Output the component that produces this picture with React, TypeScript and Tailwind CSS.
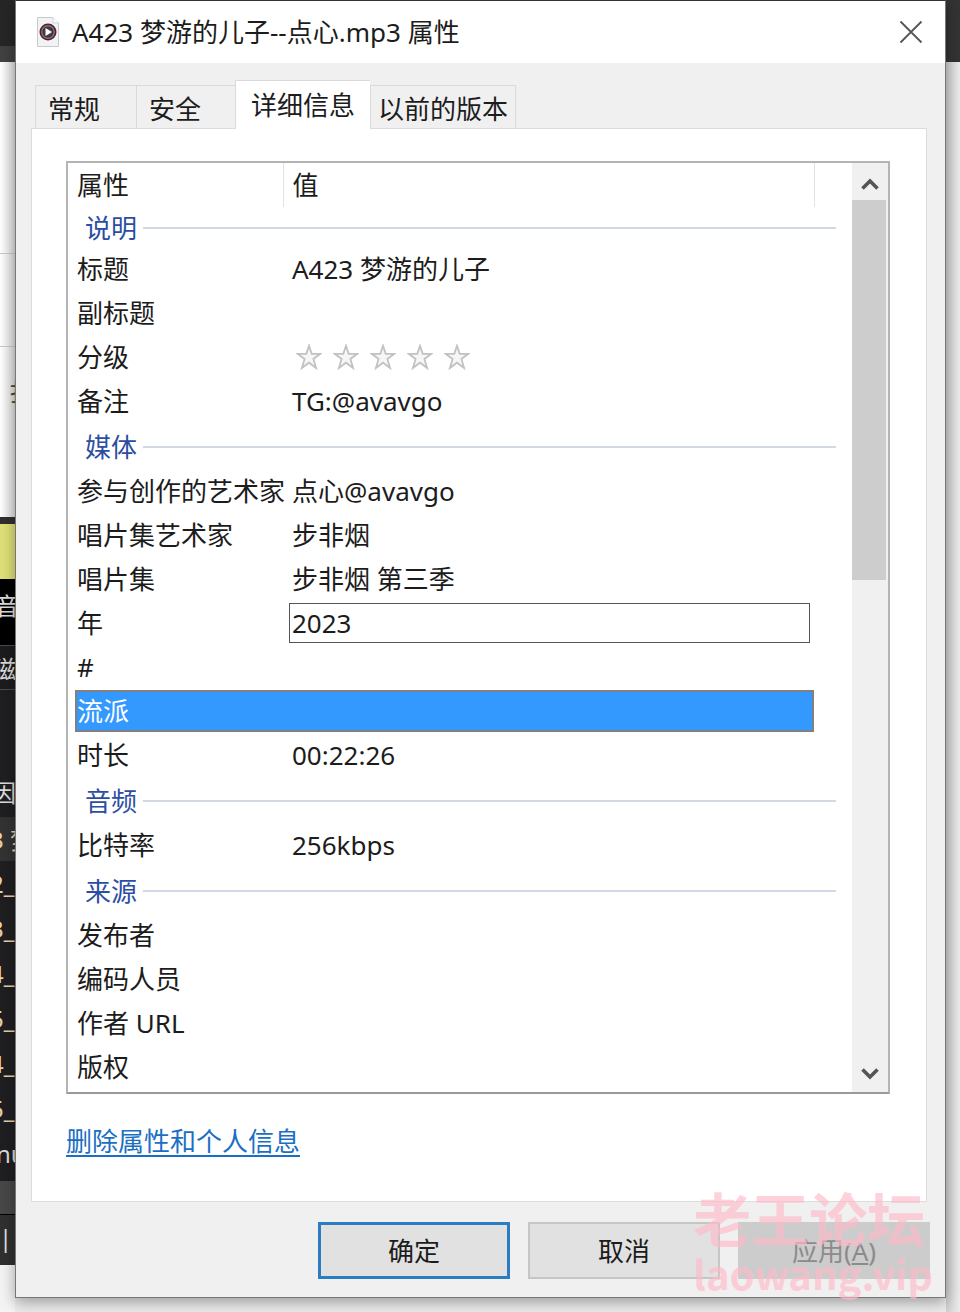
import React, { useState } from 'react';

interface Property {
  name: string;
  value?: string;
  kind?: 'stars' | 'input';
  selected?: boolean;
}

interface PropertyGroup {
  title: string;
  rows: Property[];
}

const groups: PropertyGroup[] = [
  {
    title: '说明',
    rows: [
      { name: '标题', value: 'A423 梦游的儿子' },
      { name: '副标题' },
      { name: '分级', kind: 'stars' },
      { name: '备注', value: 'TG:@avavgo' },
    ],
  },
  {
    title: '媒体',
    rows: [
      { name: '参与创作的艺术家', value: '点心@avavgo' },
      { name: '唱片集艺术家', value: '步非烟' },
      { name: '唱片集', value: '步非烟 第三季' },
      { name: '年', kind: 'input' },
      { name: '#' },
      { name: '流派', selected: true },
      { name: '时长', value: '00:22:26' },
    ],
  },
  {
    title: '音频',
    rows: [{ name: '比特率', value: '256kbps' }],
  },
  {
    title: '来源',
    rows: [{ name: '发布者' }, { name: '编码人员' }, { name: '作者 URL' }, { name: '版权' }],
  },
];

const tabs = [
  { label: '常规', className: 'h-[43px] border-l pl-3 pr-9' },
  { label: '安全', className: 'h-[43px] border-l pl-3 pr-[34px]' },
  { label: '详细信息', className: '-mb-px h-[49px] border-l bg-white px-[15px] pb-1', active: true },
  { label: '以前的版本', className: 'h-[43px] border-x px-[7px]' },
];

const files = ['2_', '3_', '4_', '5_', '4_', '5_'];

const FileIcon = () => (
  <svg width="22" height="30" viewBox="0 0 22 30" aria-hidden="true">
    <path d="M0.5 0.5H16L21.5 6V29.5H0.5Z" fill="#f3f3f5" stroke="#c9c9c9" />
    <path d="M16 0.5V6H21.5" fill="#fff" stroke="#d5d5d5" />
    <circle cx="11" cy="15" r="8.5" fill="#3a2b3c" />
    <circle cx="11" cy="15" r="6.2" fill="none" stroke="#a8675c" strokeWidth="1.4" />
    <circle cx="11" cy="15" r="4.6" fill="#39405a" />
    <path d="M8.5 11L15 15L8.5 19Z" fill="#fff" />
  </svg>
);

const Stars = () => (
  <div className="flex gap-[11px] pl-1">
    {[1, 2, 3, 4, 5].map((n) => (
      <button key={n} type="button" aria-label={`${n} 星`}>
        <svg width="26" height="26" viewBox="0 0 26 26" className="block">
          <path
            d="M13 1.800L15.700 9.800H24.500L17.400 14.900L20.100 24L13 18.700L5.900 24L8.600 14.900L1.500 9.800H10.300Z"
            fill="#f6f6f6"
            stroke="#c2c2c2"
            strokeWidth="1.800"
          />
        </svg>
      </button>
    ))}
  </div>
);

const PropertyRow = ({ row }: { row: Property }) => {
  const [year, setYear] = useState('2023');

  if (row.selected) {
    return (
      <tr className="h-11">
        <th scope="row" colSpan={2} className="p-0 text-left font-normal">
          <div className="flex h-[42px] items-center border-2 border-[#808080] bg-[#3399ff] text-white">
            {row.name}
          </div>
        </th>
        <td />
      </tr>
    );
  }

  return (
    <tr className="h-11">
      <th scope="row" className="p-0 pl-0.5 text-left font-normal whitespace-nowrap">
        {row.kind === 'input' ? <label htmlFor="year">{row.name}</label> : row.name}
      </th>
      <td className={row.kind === 'input' ? 'p-0 pl-1.5 pr-1' : 'p-0 pl-[9px]'}>
        {row.kind === 'stars' && <Stars />}
        {row.kind === 'input' && (
          <input
            id="year"
            value={year}
            onChange={(e) => setYear(e.target.value)}
            className="block h-10 w-full border border-[#555] bg-white pl-0.5 outline-none"
          />
        )}
        {row.value}
      </td>
      <td />
    </tr>
  );
};

// Sliver of the windows that show to the left of the dialog
const LeftEdge = () => (
  <div
    aria-hidden="true"
    className="flex w-[15px] shrink-0 flex-col overflow-hidden bg-[#f4f4f4] text-[24px] leading-[45px] whitespace-nowrap text-[#ddd]"
  >
    <div className="h-[46px] bg-[#262626]" />
    <div className="h-4 bg-[#414141]" />
    <div className="h-[191px] bg-linear-to-r from-white to-[#dcdcdc]" />
    <div className="h-[93px] border-t border-[#c8c8c8] bg-linear-to-r from-white to-[#dcdcdc]" />
    <div className="h-[171px] border-t border-[#c8c8c8] bg-linear-to-r from-white to-[#dcdcdc] pt-[22px] pl-[9px] text-[#4b4936]">
      扌
    </div>
    <div className="h-[7px] bg-[#303030]" />
    <div className="h-[55px] bg-[#dfe077]" />
    <div className="h-[66px] bg-black pt-1 -indent-[5px]">音</div>
    <div className="h-[45px] border-y border-[#4a4a4a] bg-[#1c1c1e] -indent-[8px]">磁</div>
    <div className="h-[127px] bg-[#1f1f22] pt-[80px] -indent-[8px]">因</div>
    <div className="h-[44px] bg-[#333] -indent-[10px] text-[#e9d3ae]">3 梦</div>
    {files.map((file, i) => (
      <div key={i} className="h-[45px] bg-[#1f1f22] -indent-[10px] text-[#e9d3ae]">
        {file}
      </div>
    ))}
    <div className="h-[50px] bg-[#1f1f22] -indent-[4px]">nu</div>
    <div className="h-[33px] bg-[#484848]" />
    <div className="h-[51px] border-t border-black bg-[#303030] -indent-px">|</div>
  </div>
);

const ScrollBar = () => (
  <div className="flex w-9 shrink-0 flex-col bg-[#f0f0f0] text-[#555]">
    <button type="button" aria-label="向上滚动" className="flex h-[37px] items-center pt-1 pl-[9px]">
      <svg width="18" height="14" viewBox="0 0 18 14">
        <path d="M1.500 11.500L9 4L16.500 11.500" fill="none" stroke="currentColor" strokeWidth="3.600" />
      </svg>
    </button>
    <div className="flex-1 pr-0.5">
      <div className="h-[380px] bg-[#cdcdcd]" />
    </div>
    <button type="button" aria-label="向下滚动" className="flex h-[37px] items-center pl-[9px]">
      <svg width="18" height="14" viewBox="0 0 18 14">
        <path d="M1.500 2.500L9 10L16.500 2.500" fill="none" stroke="currentColor" strokeWidth="3.600" />
      </svg>
    </button>
  </div>
);

export default function App() {
  return (
    <div className="flex min-h-screen bg-[#ececec] font-['Noto_Sans','Noto_Sans_CJK_SC',sans-serif] text-[26px] leading-9 text-[#1c1c1c]">
      <LeftEdge />

      <div
        role="dialog"
        aria-labelledby="dialog-title"
        className="relative mb-[13px] min-w-0 flex-1 self-start border border-[#777] border-t-[#333] bg-[#f0f0f0] shadow-[0_4px_14px_rgba(0,0,0,0.35)]"
      >
        <header className="flex h-[62px] items-center bg-white pr-[22px] pl-[21px]">
          <FileIcon />
          <h1 id="dialog-title" className="ml-[13px] flex-1 whitespace-nowrap">
            A423 梦游的儿子--点心.mp3 属性
          </h1>
          <button type="button" aria-label="关闭">
            <svg width="24" height="24" viewBox="0 0 24 24" className="block">
              <path d="M1.500 1.500L22.500 22.500M22.500 1.500L1.500 22.500" stroke="#555" strokeWidth="1.800" />
            </svg>
          </button>
        </header>

        <div className="pt-[17px] pr-[18px] pl-[15px]">
          <div role="tablist" className="flex items-end pl-1">
            {tabs.map((tab) => (
              <button
                key={tab.label}
                type="button"
                role="tab"
                aria-selected={!!tab.active}
                className={`relative flex items-center border-t border-[#dadada] pt-1 whitespace-nowrap ${tab.className}`}
              >
                {tab.label}
              </button>
            ))}
          </div>

          <div role="tabpanel" className="border border-[#dcdcdc] bg-white pt-8 pr-9 pb-[42px] pl-[34px]">
            <div className="flex border-2 border-[#b4b4b4] border-b-[#9a9a9a]">
              <div className="min-w-0 flex-1 pb-[3px] pl-[7px]">
                <table className="w-full table-fixed border-collapse">
                  <colgroup>
                    <col className="w-[208px]" />
                    <col />
                    <col className="w-[38px]" />
                  </colgroup>
                  <thead>
                    <tr className="h-11">
                      <th className="border-r border-[#e2e2e2] p-0 pl-0.5 text-left font-normal">属性</th>
                      <th className="border-r border-[#e2e2e2] p-0 pl-[9px] text-left font-normal">值</th>
                      <td />
                    </tr>
                  </thead>
                  {groups.map((group, i) => (
                    <tbody key={group.title}>
                      <tr className={i === 0 ? 'h-10' : 'h-[46px]'}>
                        <th colSpan={3} className="p-0 pt-0.5 pr-4 pl-2.5 text-left font-normal">
                          <div className="flex items-center gap-1.5 text-[#2b4ea2]">
                            {group.title}
                            <span className="h-0.5 flex-1 bg-[#d3d8e6]" />
                          </div>
                        </th>
                      </tr>
                      {group.rows.map((row) => (
                        <PropertyRow key={row.name} row={row} />
                      ))}
                    </tbody>
                  ))}
                </table>
              </div>
              <ScrollBar />
            </div>

            <a href="#remove" className="mt-[29px] inline-block text-[#1a6fc4] underline decoration-2 underline-offset-4">
              删除属性和个人信息
            </a>
          </div>
        </div>

        <footer className="flex justify-end gap-[18px] pt-5 pr-[15px] pb-[18px]">
          <button type="button" className="h-[57px] w-48 border-[3px] border-[#2b7cc0] bg-[#e1e1e1]">
            确定
          </button>
          <button type="button" className="h-[57px] w-48 border-2 border-[#c6c6c6] bg-[#e1e1e1]">
            取消
          </button>
          <button type="button" disabled className="h-[57px] w-48 bg-[#cccccc] text-[#8b8b8b]">
            应用(<span className="underline">A</span>)
          </button>
        </footer>

        {/* forum watermark */}
        <div className="pointer-events-none absolute right-3 bottom-0 font-['Noto_Sans_CJK_SC',sans-serif] font-bold text-[#ffb9c8]/65">
          <div className="text-[58px] leading-[64px]">老王论坛</div>
          <div className="text-[40px] leading-[48px]">laowang.vip</div>
        </div>
      </div>

      <div aria-hidden="true" className="w-3.5 shrink-0 bg-linear-to-r from-[#cfcfcf] to-[#ececec]">
        <div className="h-[62px] bg-[#333]" />
      </div>
    </div>
  );
}
